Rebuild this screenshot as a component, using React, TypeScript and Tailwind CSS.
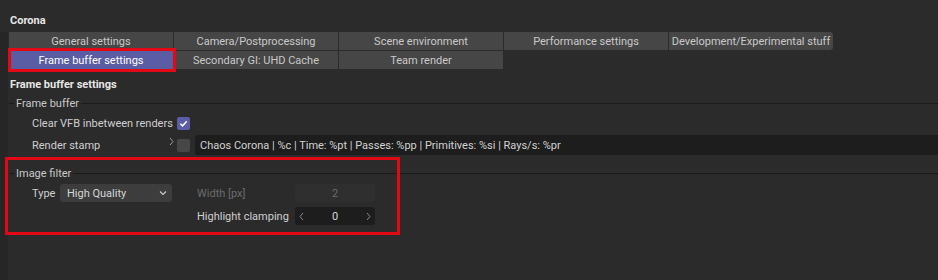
import React from 'react';

const tabsTop = ['General settings', 'Camera/Postprocessing', 'Scene environment', 'Performance settings', 'Development/Experimental stuff'];
const tabsBottom = ['Frame buffer settings', 'Secondary GI: UHD Cache', 'Team render'];

const GroupHeader: React.FC<{ title: string }> = ({ title }) => (
  <div className="flex items-center h-[16px] pl-[9px]">
    <div className="w-[5px] h-px bg-[#1b1b1b]" />
    <span className="px-[2px] text-[#c8c8c8]">{title}</span>
    <div className="flex-1 h-px bg-[#1b1b1b]" />
  </div>
);

const Chevron: React.FC<{ dir: 'left' | 'right'; color?: string }> = ({ dir, color = '#8a8a8a' }) => (
  <svg width="5" height="9" viewBox="0 0 5 9">
    <path
      d={dir === 'right' ? 'M1 1 L4 4.5 L1 8' : 'M4 1 L1 4.5 L4 8'}
      stroke={color}
      strokeWidth="1"
      fill="none"
    />
  </svg>
);

const Check: React.FC<{ checked?: boolean }> = ({ checked }) => (
  <div
    className={
      checked
        ? 'w-[13px] h-[13px] rounded-[2px] bg-[#5b5ea6] flex items-center justify-center'
        : 'w-[13px] h-[13px] rounded-[2px] bg-[#474747]'
    }
  >
    {checked && (
      <svg width="9" height="9" viewBox="0 0 10 10">
        <path d="M1.5 5.2 L4 7.6 L8.6 2.4" stroke="#fff" strokeWidth="1.6" fill="none" />
      </svg>
    )}
  </div>
);

const App: React.FC = () => {
  return (
    <div className="relative w-[938px] h-[280px] overflow-hidden whitespace-nowrap bg-[#2b2b2b] text-[11px] leading-none text-[#cfcfcf] font-['Roboto','Noto_Sans',sans-serif]">
      <div className="h-[32px] pl-[10px] pt-[15px] font-bold text-[#e6e6e6]">Corona</div>

      <div className="flex">
        <div className="w-[8px] h-[248px] bg-[#262626]" />
        <div className="flex-1">
          {/* tabs */}
          <div className="ml-[1px] flex flex-col gap-px">
            <div className="flex gap-px">
              {tabsTop.map((t, i) => (
                <div
                  key={t}
                  className={
                    'w-[164px] h-[18px] pt-px flex items-center justify-center bg-[#464646] text-[#c9c9c9]' +
                    (i === tabsTop.length - 1 ? ' rounded-tr-[3px] rounded-br-[3px]' : '')
                  }
                >
                  {t}
                </div>
              ))}
            </div>
            <div className="flex gap-px">
              {tabsBottom.map((t, i) => (
                <div
                  key={t}
                  className={
                    i === 0
                      ? 'w-[164px] h-[18px] pt-px flex items-center justify-center bg-[#5a5da3] text-white'
                      : 'w-[164px] h-[18px] pt-px flex items-center justify-center bg-[#464646] text-[#c9c9c9]'
                  }
                >
                  {t}
                </div>
              ))}
            </div>
          </div>

          <div className="h-[23px] pl-[2px] pt-[10px] font-bold text-[#e6e6e6]">Frame buffer settings</div>

          <div className="-ml-[8px] mt-[3px]">
            <GroupHeader title="Frame buffer" />
          </div>

          {/* Clear VFB */}
          <div className="flex items-center h-[22px] mt-[1px]">
            <span className="w-[169px] pl-[24px]">Clear VFB inbetween renders</span>
            <Check checked />
          </div>

          {/* Render stamp */}
          <div className="flex items-center h-[20px] mt-[1px]">
            <span className="w-[161px] pl-[24px]">Render stamp</span>
            <span className="w-[8px] -mt-[7px]">
              <Chevron dir="right" color="#9a9a9a" />
            </span>
            <Check />
            <div className="ml-[5px] flex-1 h-[20px] flex items-center pl-[5px] bg-[#1d1d1d] rounded-l-[3px] text-[#d2d2d2]">
              Chaos Corona | %c | Time: %pt | Passes: %pp | Primitives: %si | Rays/s: %pr
            </div>
          </div>

          <div className="-ml-[8px] mt-[10px]">
            <GroupHeader title="Image filter" />
          </div>

          {/* Image filter grid */}
          <div className="mt-[3px] pl-[24px] grid grid-cols-[28px_112px_25px_98px_80px] grid-rows-[18px_18px] gap-y-[5px] items-center">
            <span>Type</span>
            <div className="h-[18px] bg-[#3d3d3d] rounded-[3px] flex items-center justify-between pl-[7px] pr-[5px] text-[#d6d6d6]">
              <span>High Quality</span>
              <svg width="8" height="6" viewBox="0 0 8 6">
                <path d="M1 1.5 L4 4.5 L7 1.5" stroke="#cfcfcf" strokeWidth="1.1" fill="none" />
              </svg>
            </div>
            <span />
            <span className="text-[#6b6b6b]">Width [px]</span>
            <div className="h-[18px] bg-[#2f2f2f] rounded-[3px] flex items-center justify-center text-[#6b6b6b]">2</div>

            <span />
            <span />
            <span />
            <span>Highlight clamping</span>
            <div className="h-[18px] bg-[#1d1d1d] rounded-[3px] flex items-center justify-between px-[4px] text-[#d6d6d6]">
              <Chevron dir="left" />
              <span>0</span>
              <Chevron dir="right" />
            </div>
          </div>
        </div>
      </div>

      {/* annotation overlays */}
      <div className="absolute left-[8px] top-[48px] w-[168px] h-[24px] border-[3px] border-[#e10a14]" />
      <div className="absolute left-[5px] top-[157px] w-[395px] h-[78px] border-[3px] border-[#e10a14]" />
    </div>
  );
};

export default App;
